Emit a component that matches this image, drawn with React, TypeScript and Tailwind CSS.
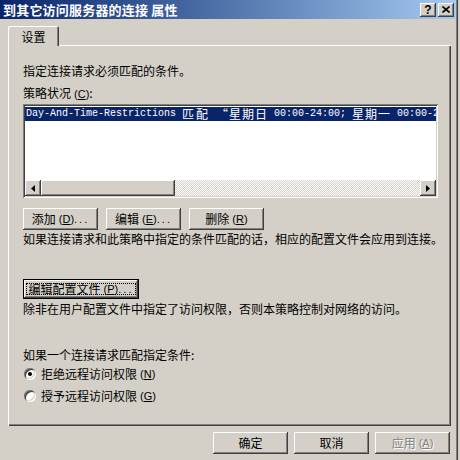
import React from "react";

const cjk = "font-['Noto_Sans_CJK_SC',sans-serif]";
const raised =
  "shadow-[inset_-1px_-1px_0_#404040,inset_1px_1px_0_#ffffff,inset_-2px_-2px_0_#808080,inset_2px_2px_0_#d4d0c8]";
const sunken =
  "shadow-[inset_1px_1px_0_#808080,inset_-1px_-1px_0_#ffffff,inset_2px_2px_0_#404040,inset_-2px_-2px_0_#d4d0c8]";

function Key({ k }: { k: string }) {
  return (
    <span className="ml-[3px] font-['Liberation_Sans',sans-serif] text-[11px]">
      (<span className="underline">{k}</span>)
    </span>
  );
}

function Btn({
  label,
  k,
  dots,
  disabled,
}: {
  label: string;
  k?: string;
  dots?: boolean;
  disabled?: boolean;
}) {
  return (
    <div
      className={`flex h-[22px] w-[75px] items-center justify-center bg-[#d4d0c8] text-[12px] ${raised} ${
        disabled ? "text-[#808080] [text-shadow:1px_1px_0_#ffffff]" : "text-black"
      }`}
    >
      <span>{label}</span>
      {k && <Key k={k} />}
      {dots && <span className="font-['Liberation_Sans',sans-serif] text-[11px] tracking-[2px]">...</span>}
    </div>
  );
}

function Arrow({ dir }: { dir: "left" | "right" }) {
  return (
    <div className={`flex h-[16px] w-[16px] items-center justify-center bg-[#d4d0c8] ${raised}`}>
      <svg width="4" height="7" viewBox="0 0 4 7">
        {dir === "left" ? (
          <path d="M4 0 L0 3.5 L4 7 Z" fill="#000" />
        ) : (
          <path d="M0 0 L4 3.5 L0 7 Z" fill="#000" />
        )}
      </svg>
    </div>
  );
}

function Radio({ checked, label, k }: { checked?: boolean; label: string; k: string }) {
  return (
    <div className="flex h-[16px] items-center">
      <div className="ml-[1px] flex h-[12px] w-[12px] items-center justify-center rounded-full bg-white shadow-[inset_1px_1px_0_#808080,inset_-1px_-1px_0_#ffffff,inset_2px_2px_0_#404040,inset_-2px_-2px_0_#d4d0c8]">
        {checked && <div className="h-[4px] w-[4px] rounded-full bg-black" />}
      </div>
      <span className="ml-[5px]">{label}</span>
      <Key k={k} />
    </div>
  );
}

export default function App() {
  return (
    <div className={`h-[460px] w-[460px] overflow-hidden bg-[#d4d0c8] ${cjk} text-[12px] leading-[16px] text-black`}>
      <div className="flex h-[460px] w-[458px] flex-col shadow-[inset_-1px_0_0_#404040,inset_-2px_0_0_#808080]">
        {/* Title bar */}
        <div className="flex h-[19px] w-[456px] items-center justify-between bg-gradient-to-r from-[#0a246a] to-[#a6caf0] pl-[3px] pr-[2px]">
          <span className="text-[13px] font-bold leading-[19px] tracking-[0.2px] text-white">到其它访问服务器的连接 属性</span>
          <div className="flex gap-[2px]">
            <div
              className={`flex h-[14px] w-[16px] items-center justify-center bg-[#d4d0c8] font-['Liberation_Sans',sans-serif] text-[12px] font-bold leading-none ${raised}`}
            >
              ?
            </div>
            <div className={`flex h-[14px] w-[16px] items-center justify-center bg-[#d4d0c8] ${raised}`}>
              <svg width="8" height="7" viewBox="0 0 8 7">
                <path d="M0.5 0.5 L7.5 6.5 M7.5 0.5 L0.5 6.5" stroke="#000" strokeWidth="1.6" />
              </svg>
            </div>
          </div>
        </div>

        {/* Tab */}
        <div className="ml-[8px] mt-[7px] flex">
          <div className="relative z-10 flex h-[20px] w-[51px] items-start justify-center rounded-t-[2px] bg-[#d4d0c8] pt-[3px] shadow-[inset_1px_1px_0_#ffffff,inset_-1px_0_0_#404040,inset_-2px_0_0_#808080]">
            设置
          </div>
        </div>

        {/* Panel */}
        <div className="-mt-[1px] ml-[8px] flex h-[381px] w-[443px] flex-col pl-[15px] pt-[18px] shadow-[inset_1px_1px_0_#ffffff,inset_-1px_-1px_0_#404040,inset_-2px_-2px_0_#808080]">
          <div>指定连接请求必须匹配的条件。</div>
          <div className="mt-[6px]">
            策略状况
            <Key k="C" />:
          </div>

          {/* List box */}
          <div className={`mt-[2px] flex h-[94px] w-[415px] flex-col bg-white p-[2px] ${sunken}`}>
            <div className="mt-[1px] flex h-[14px] items-center overflow-x-clip whitespace-nowrap bg-[#0a246a] pl-[1px] leading-[14px] text-white">
              <span className="font-['Liberation_Mono',monospace] text-[10px]">Day-And-Time-Restrictions&nbsp;</span>
              <span className="tracking-[2px]">匹配</span>
              <span className="font-['Liberation_Mono',monospace] text-[10px]">&nbsp;</span>
              <span className="tracking-[1px]">“星期日</span>
              <span className="font-['Liberation_Mono',monospace] text-[10px]">&nbsp;00:00-24:00;&nbsp;</span>
              <span className="tracking-[1px]">星期一</span>
              <span className="font-['Liberation_Mono',monospace] text-[10px]">&nbsp;00:00-24:</span>
            </div>
            <div className="flex-1" />
            <div className="flex h-[16px]">
              <Arrow dir="left" />
              <div className={`h-[16px] w-[134px] bg-[#d4d0c8] ${raised}`} />
              <div className="h-[16px] flex-1 bg-[conic-gradient(#ffffff_25%,#d4d0c8_0_50%,#ffffff_0_75%,#d4d0c8_0)] bg-[length:2px_2px]" />
              <Arrow dir="right" />
            </div>
          </div>

          <div className="mt-[10px] flex gap-[8px]">
            <Btn label="添加" k="D" dots />
            <Btn label="编辑" k="E" dots />
            <Btn label="删除" k="R" />
          </div>

          <div className="mt-[1px]">如果连接请求和此策略中指定的条件匹配的话，相应的配置文件会应用到连接。</div>

          <div className="mt-[32px] flex h-[20px] w-[116px] bg-black p-[1px]">
            <div className={`flex flex-1 items-center justify-center bg-[#d4d0c8] ${raised}`}>
              <div className="flex h-[12px] items-center border border-dotted border-black px-[2px]">
                <span>编辑配置文件</span>
                <Key k="P" />
                <span className="font-['Liberation_Sans',sans-serif] text-[11px] tracking-[2px]">...</span>
              </div>
            </div>
          </div>

          <div className="mt-[2px]">除非在用户配置文件中指定了访问权限，否则本策略控制对网络的访问。</div>

          <div className="mt-[30px]">如果一个连接请求匹配指定条件:</div>
          <div className="mt-[3px]">
            <Radio checked label="拒绝远程访问权限" k="N" />
          </div>
          <div className="mt-[6px]">
            <Radio label="授予远程访问权限" k="G" />
          </div>
        </div>

        {/* Bottom buttons */}
        <div className="mt-[6px] flex w-[456px] justify-end gap-[6px] pr-[6px]">
          <Btn label="确定" />
          <Btn label="取消" />
          <Btn label="应用" k="A" disabled />
        </div>
      </div>
    </div>
  );
}
